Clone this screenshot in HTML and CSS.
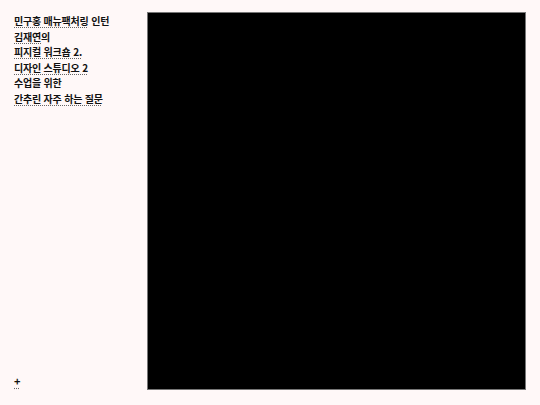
FILE: index.html
```html
<!DOCTYPE html>
<html lang="ko">
<head>
<meta charset="utf-8">
<link rel="stylesheet" href="styles.css">
</head>
<body>
<div class="page">
  <aside class="side">
    <nav class="nav">
      <a class="lnk" href="#">민구홍 매뉴팩처링</a> 인턴<br>
      <a class="lnk" href="#">김재연</a>의<br>
      <a class="lnk" href="#">피지컬 워크숍 2.</a><br>
      <a class="lnk" href="#">디자인 스튜디오 2</a><br>
      수업을 위한<br>
      <a class="lnk" href="#">간추린 자주 하는 질문</a>
    </nav>
    <a class="lnk plus" href="#">+</a>
  </aside>
  <main class="screen"></main>
</div>
</body>
</html>
```
FILE: styles.css
```css
html, body {
  margin: 0;
  padding: 0;
  background: #fff8f8;
}
body {
  font-family: "Noto Sans CJK KR", "Noto Sans", sans-serif;
  font-weight: 700;
  font-size: 10px;
  color: #111;
}
.page {
  display: flex;
  height: 405px;
  box-sizing: border-box;
  padding: 12px 14px 15px 14px;
}
.side {
  width: 133px;
  display: flex;
  flex-direction: column;
  justify-content: space-between;
}
.nav {
  line-height: 15.5px;
  margin-top: 1px;
  letter-spacing: -0.2px;
}
.lnk {
  color: #111;
  text-decoration: underline dotted #666;
  text-underline-offset: 2px;
}
.plus {
  font-size: 11px;
  line-height: 14px;
  margin-bottom: 2px;
}
.screen {
  flex: 1;
  background: #000;
  border: 1px solid #777;
}
```
